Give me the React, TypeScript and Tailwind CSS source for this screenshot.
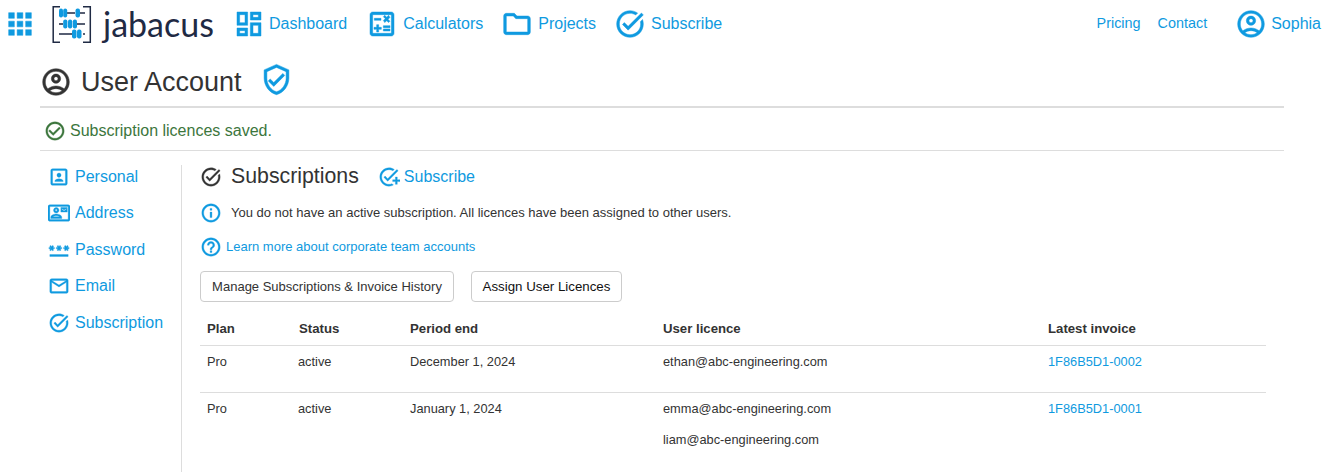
const paths = {
  apps: "M4 8h4V4H4v4zm6 12h4v-4h-4v4zm-6 0h4v-4H4v4zm0-6h4v-4H4v4zm6 0h4v-4h-4v4zm6-10v4h4V4h-4zm-6 4h4V4h-4v4zm6 6h4v-4h-4v4zm0 6h4v-4h-4v4z",
  dashboard: "M19 5v2h-4V5h4M9 5v6H5V5h4m10 8v6h-4v-6h4M9 17v2H5v-2h4M21 3h-8v6h8V3zM11 3H3v10h8V3zm10 8h-8v10h8V11zm-10 4H3v6h8v-6z",
  calculate: "M19 3H5c-1.1 0-2 .9-2 2v14c0 1.1.9 2 2 2h14c1.1 0 2-.9 2-2V5c0-1.1-.9-2-2-2zm0 16H5V5h14v14zM6.25 7.72h5v1.5h-5zM13 15.75h5v1.5h-5zM13 13.25h5v1.5h-5zM8 18h1.5v-2h2v-1.5h-2v-2H8v2H6V16h2zM14.09 10.95l1.41-1.41 1.41 1.41 1.06-1.06-1.41-1.42 1.41-1.41L16.91 5.5 15.5 6.91 14.09 5.5l-1.06 1.06 1.41 1.41-1.41 1.42z",
  folder: "M9.17 6l2 2H20v10H4V6h5.17M10 4H4c-1.1 0-1.99.9-1.99 2L2 18c0 1.1.9 2 2 2h16c1.1 0 2-.9 2-2V8c0-1.1-.9-2-2-2h-8l-2-2z",
  task: "M22,5.18L10.59,16.6l-4.24-4.24l1.41-1.41l2.83,2.83l10-10L22,5.18z M19.79,10.22C19.92,10.79,20,11.39,20,12c0,4.42-3.58,8-8,8s-8-3.58-8-8c0-4.42,3.58-8,8-8c1.58,0,3.04,0.46,4.28,1.25l1.44-1.44C16.1,2.67,14.13,2,12,2C6.48,2,2,6.48,2,12c0,5.52,4.48,10,10,10s10-4.48,10-10c0-1.19-0.22-2.33-0.6-3.39L19.79,10.22z",
  checkCircle: "M16.59 7.58L10 14.17l-3.59-3.58L5 12l5 5 8-8zM12 2C6.48 2 2 6.48 2 12s4.48 10 10 10 10-4.48 10-10S17.52 2 12 2zm0 18c-4.42 0-8-3.58-8-8s3.58-8 8-8 8 3.58 8 8-3.58 8-8 8z",
  account: "M12 2C6.48 2 2 6.48 2 12s4.48 10 10 10 10-4.48 10-10S17.52 2 12 2zM7.35 18.5C8.66 17.56 10.26 17 12 17s3.34.56 4.65 1.5C15.34 19.44 13.74 20 12 20s-3.34-.56-4.65-1.5zm10.79-1.38C16.45 15.8 14.32 15 12 15s-4.45.8-6.14 2.12C4.7 15.73 4 13.95 4 12c0-4.42 3.58-8 8-8s8 3.58 8 8c0 1.95-.7 3.73-1.86 5.12zM12 6c-1.93 0-3.5 1.57-3.5 3.5S10.07 13 12 13s3.5-1.57 3.5-3.5S13.93 6 12 6zm0 5c-.83 0-1.5-.67-1.5-1.5S11.17 8 12 8s1.5.67 1.5 1.5S12.83 11 12 11z",
  verified: "M12 1L3 5v6c0 5.55 3.84 10.74 9 12 5.16-1.26 9-6.45 9-12V5l-9-4zm7 10c0 4.52-2.98 8.69-7 9.93-4.02-1.24-7-5.41-7-9.93V6.3l7-3.11 7 3.11V11zm-11.59.59L6 13l4 4 8-8-1.41-1.42L10 14.17z",
  portrait: "M12 12.25c1.24 0 2.25-1.01 2.25-2.25S13.24 7.75 12 7.75 9.75 8.76 9.75 10s1.01 2.25 2.25 2.25zm4.5 4c0-1.5-3-2.25-4.5-2.25s-4.5.75-4.5 2.25V17h9v-.75zM19 3H5c-1.1 0-2 .9-2 2v14c0 1.1.9 2 2 2h14c1.1 0 2-.9 2-2V5c0-1.1-.9-2-2-2zm0 16H5V5h14v14z",
  contact: "M22 3H2C.9 3 0 3.9 0 5v14c0 1.1.9 2 2 2h20c1.1 0 1.99-.9 1.99-2L24 5c0-1.1-.9-2-2-2zm0 16H2V5h20v14zM21 6h-7v5h7V6zm-1 2l-2.5 1.75L15 8V7l2.5 1.75L20 7v1zM9 12c1.65 0 3-1.35 3-3s-1.35-3-3-3-3 1.35-3 3 1.35 3 3 3zm0-4c.55 0 1 .45 1 1s-.45 1-1 1-1-.45-1-1 .45-1 1-1zm6 8.59c0-2.5-3.97-3.58-6-3.58s-6 1.08-6 3.58V18h12v-1.41zM5.48 16c.74-.5 2.22-1 3.52-1s2.77.49 3.52 1H5.48z",
  password: "M2,17h20v2H2V17z M3.15,12.95L4,11.47l0.85,1.48l1.3-0.75L5.3,10.72H7v-1.5H5.3l0.85-1.47L4.85,7L4,8.47L3.15,7l-1.3,0.75L2.7,9.22H1v1.5h1.7L1.85,12.2L3.15,12.95z M9.85,12.2l1.3,0.75L12,11.47l0.85,1.48l1.3-0.75l-0.85-1.48H15v-1.5h-1.7l0.85-1.47L12.85,7L12,8.47L11.15,7l-1.3,0.75l0.85,1.47H9v1.5h1.7L9.85,12.2z M23,9.22h-1.7l0.85-1.47L20.85,7L20,8.47L19.15,7l-1.3,0.75l0.85,1.47H17v1.5h1.7l-0.85,1.48l1.3,0.75L20,11.47l0.85,1.48l1.3-0.75l-0.85-1.48H23V9.22z",
  mail: "M20 4H4c-1.1 0-1.99.9-1.99 2L2 18c0 1.1.9 2 2 2h16c1.1 0 2-.9 2-2V6c0-1.1-.9-2-2-2zm0 14H4V8l8 5 8-5v10zm-8-7L4 6h16l-8 5z",
  info: "M11 7h2v2h-2zm0 4h2v6h-2zm1-9C6.48 2 2 6.48 2 12s4.48 10 10 10 10-4.48 10-10S17.52 2 12 2zm0 18c-4.41 0-8-3.59-8-8s3.59-8 8-8 8 3.59 8 8-3.59 8-8 8z",
  help: "M11 18h2v-2h-2v2zm1-16C6.48 2 2 6.48 2 12s4.48 10 10 10 10-4.48 10-10S17.52 2 12 2zm0 18c-4.41 0-8-3.59-8-8s3.59-8 8-8 8 3.59 8 8-3.59 8-8 8zm0-14c-2.21 0-4 1.79-4 4h2c0-1.1.9-2 2-2s2 .9 2 2c0 2-3 1.75-3 5h2c0-2.25 3-2.5 3-5 0-2.21-1.79-4-4-4z",
  addTask: "M22,5.18L10.59,16.6l-4.24-4.24l1.41-1.41l2.83,2.83l10-10L22,5.18z M12,20c-4.41,0-8-3.59-8-8s3.59-8,8-8c1.57,0,3.04,0.46,4.28,1.25l1.45-1.45C16.1,2.67,14.13,2,12,2C6.48,2,2,6.48,2,12s4.48,10,10,10c1.73,0,3.36-0.44,4.78-1.22l-1.5-1.5C14.28,19.74,13.17,20,12,20z M19,15h-3v2h3v3h2v-3h3v-2h-3v-3h-2V15z",
} as const;

function Icon({ name, className }: { name: keyof typeof paths; className: string }) {
  return (
    <svg viewBox="0 0 24 24" fill="currentColor" className={`shrink-0 stroke-current stroke-[0.35] ${className}`} aria-hidden>
      <path d={paths[name]} />
    </svg>
  );
}

function Logo() {
  return (
    <svg viewBox="0 0 40 37" className="h-[37px] w-[40px] shrink-0" aria-hidden>
      <path d="M8 .8H1.2v35.4H8M31 .8h7.3v35.4H31" fill="none" stroke="#1f2a44" strokeWidth="1.5" />
      <path d="M15 7h8M28 7h5M7 18h4M25 18h8M7 28h13M31 28h2" fill="none" stroke="#1f2a44" strokeWidth="1.5" />
      <g fill="#0f9ae0">
        <rect x="7" y="2.5" width="4" height="9" rx="2" />
        <rect x="11.2" y="2.5" width="4" height="9" rx="2" />
        <rect x="23.5" y="2.5" width="4.5" height="9" rx="2" />
        <rect x="11.2" y="13.5" width="4.2" height="9" rx="2" />
        <rect x="16" y="13.5" width="4.2" height="9" rx="2" />
        <rect x="20.8" y="13.5" width="4.2" height="9" rx="2" />
        <rect x="20" y="23.5" width="4.5" height="9" rx="2" />
        <rect x="25" y="23.5" width="4.5" height="9" rx="2" />
      </g>
    </svg>
  );
}

const mainNav = [
  { icon: "dashboard", label: "Dashboard", cls: "ml-[19px] gap-[4px]" },
  { icon: "calculate", label: "Calculators", cls: "ml-[19px] gap-[5px]" },
  { icon: "folder", label: "Projects", cls: "ml-[18px] gap-[5px]" },
  { icon: "task", label: "Subscribe", cls: "ml-[18px] gap-[5px]" },
] as const;

const sideNav = [
  { icon: "portrait", label: "Personal" },
  { icon: "contact", label: "Address" },
  { icon: "password", label: "Password" },
  { icon: "mail", label: "Email" },
  { icon: "task", label: "Subscription" },
] as const;

const rows = [
  { end: "December 1, 2024", users: ["ethan@abc-engineering.com"], invoice: "1F86B5D1-0002", h: "h-[47px]" },
  { end: "January 1, 2024", users: ["emma@abc-engineering.com", "liam@abc-engineering.com"], invoice: "1F86B5D1-0001", h: "h-[78px]" },
];

const blue = "text-[#0f9ae0]";

export default function App() {
  return (
    <div className="h-[472px] w-[1325px] overflow-hidden bg-white font-['Liberation_Sans',Arial,sans-serif] text-[#333]">
      <nav className={`flex h-[48px] items-center text-[16px] ${blue}`}>
        <Icon name="apps" className="ml-[3px] h-[34px] w-[34px]" />
        <span className="ml-[15px] flex items-center gap-[11px]">
          <Logo />
          <span className="font-['Lato',sans-serif] text-[34px] leading-none text-[#1f2a44]">jabacus</span>
        </span>
        {mainNav.map(({ icon, label, cls }) => (
          <a key={label} className={`flex items-center ${cls}`}>
            <Icon name={icon} className="h-[32px] w-[32px]" />
            {label}
          </a>
        ))}
        <div className="ml-auto flex items-center text-[14.4px]">
          <a>Pricing</a>
          <a className="ml-[17px]">Contact</a>
          <a className="ml-[28px] mr-[4px] flex items-center gap-[4px] text-[16px]">
            <Icon name="account" className="h-[32px] w-[32px]" />
            Sophia
          </a>
        </div>
      </nav>

      <div className="mx-[40px] w-[1244px]">
        <header className="flex h-[60px] items-center border-b-2 border-[#ddd] pt-[10px]">
          <Icon name="account" className="h-[32px] w-[32px] text-[#333]" />
          <h1 className="ml-[9px] text-[27px] leading-none">User Account</h1>
          <Icon name="verified" className={`-mt-[6px] ml-[18px] h-[33px] w-[33px] ${blue}`} />
        </header>
        <div className="flex h-[43px] items-center border-b border-[#ddd] pl-[4px] pt-[4px] text-[16px] text-[#3c763d]">
          <Icon name="checkCircle" className="h-[22px] w-[22px]" />
          <span className="ml-[4px]">Subscription licences saved.</span>
        </div>

        <div className="mt-[14px] flex">
          <aside className="h-[320px] w-[142px] shrink-0 border-r border-[#ddd]">
            <ul className={`-mt-[6.4px] text-[16px] ${blue}`}>
              {sideNav.map(({ icon, label }) => (
                <li key={label} className="flex h-[36.5px] items-center">
                  <Icon name={icon} className="ml-[8px] mr-[5px] h-[22px] w-[22px]" />
                  {label}
                </li>
              ))}
            </ul>
          </aside>

          <main className="ml-[18px] w-[1066px]">
            <div className="flex h-[24px] items-center">
              <Icon name="task" className="h-[22px] w-[22px]" />
              <h2 className="ml-[9px] text-[21.3px] leading-none">Subscriptions</h2>
              <a className={`ml-[19px] flex items-center gap-[4px] text-[16px] ${blue}`}>
                <Icon name="addTask" className="h-[22px] w-[22px]" />
                Subscribe
              </a>
            </div>
            <p className="mt-[12px] flex h-[24px] items-center text-[13px]">
              <Icon name="info" className={`h-[22px] w-[22px] ${blue}`} />
              <span className="ml-[9px]">You do not have an active subscription. All licences have been assigned to other users.</span>
            </p>
            <p className={`mt-[10px] flex h-[24px] items-center text-[13px] ${blue}`}>
              <Icon name="help" className="h-[22px] w-[22px]" />
              <span className="ml-[4px]">Learn more about corporate team accounts</span>
            </p>
            <div className="mt-[12px] flex gap-[17px]">
              <button className="h-[31px] w-[254px] rounded-[4px] border border-[#ccc] bg-white text-[13px]">Manage Subscriptions &amp; Invoice History</button>
              <button className="h-[31px] w-[151px] rounded-[4px] border border-[#ccc] bg-white text-[13.3px] text-[#111]">Assign User Licences</button>
            </div>

            <table className="mt-[11px] w-[1066px] table-fixed border-collapse text-left text-[12.8px]">
              <colgroup>
                <col className="w-[91px]" />
                <col className="w-[111px]" />
                <col className="w-[253px]" />
                <col className="w-[385px]" />
                <col />
              </colgroup>
              <thead>
                <tr className="h-[32px] text-[13.2px]">
                  <th className="pl-[7px]">Plan</th>
                  <th className="pl-[8px]">Status</th>
                  <th className="pl-[8px]">Period end</th>
                  <th className="pl-[8px]">User licence</th>
                  <th className="pl-[8px]">Latest invoice</th>
                </tr>
              </thead>
              <tbody>
                {rows.map(({ end, users, invoice, h }) => (
                  <tr key={invoice} className={`border-t border-[#ddd] align-top leading-[15px] ${h}`}>
                    <td className="pl-[7px] pt-[8px]">Pro</td>
                    <td className="pl-[7px] pt-[8px]">active</td>
                    <td className="pl-[8px] pt-[8px]">{end}</td>
                    <td className="pl-[8px] pt-[8px]">
                      {users.map((u) => (
                        <div key={u} className="mb-[16px]">{u}</div>
                      ))}
                    </td>
                    <td className={`pl-[8px] pt-[8px] ${blue}`}>{invoice}</td>
                  </tr>
                ))}
              </tbody>
            </table>
          </main>
        </div>
      </div>
    </div>
  );
}
